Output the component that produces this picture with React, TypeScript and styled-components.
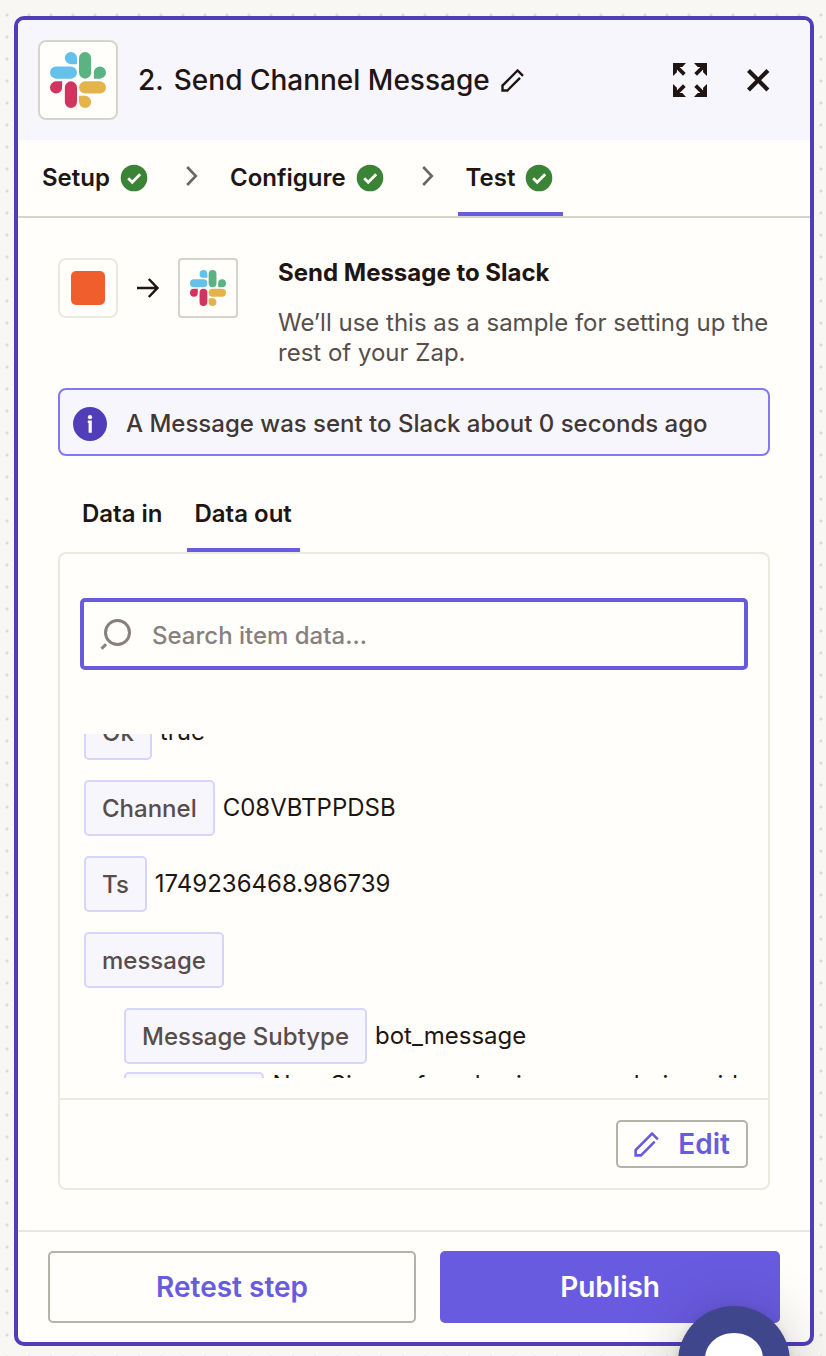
import React from "react";
import styled, { createGlobalStyle } from "styled-components";

const color = {
  ink: "#1f1513",
  soft: "#574e4c",
  accent: "#695be0",
  deep: "#503eb9",
  tint: "#f7f6fd",
  surface: "#fffefa",
  line: "#ebeae1",
  border: "#d7d5cb",
};

const GlobalStyle = createGlobalStyle`
  *, *::before, *::after { box-sizing: border-box; }
  body {
    margin: 0;
    font-family: Inter, "Liberation Sans", sans-serif;
    font-size: 24px;
    line-height: 30px;
    color: ${color.ink};
    background-color: #f8f7f4;
    background-image: radial-gradient(circle, #dddbd6 1px, transparent 2px);
    background-size: 22px 22px;
    background-position: -4px 4px;
  }
  button, input { font: inherit; color: inherit; }
  button { cursor: pointer; }
  h1, h2, p, ul { margin: 0; padding: 0; }
  ul { list-style: none; }
  svg { display: block; flex: none; }
`;

const Page = styled.div`
  padding: 16px 12px 10px 14px;
`;

const Panel = styled.main`
  border: 4px solid ${color.deep};
  border-radius: 10px;
  background: ${color.surface};
  overflow: hidden;
`;

const Header = styled.header`
  display: flex;
  align-items: center;
  padding: 20px 30px 20px 20px;
  background: ${color.tint};
`;

const AppTile = styled.span<{ $size: number; $radius: number; $line?: string }>`
  display: flex;
  flex: none;
  align-items: center;
  justify-content: center;
  width: ${(p) => p.$size}px;
  height: ${(p) => p.$size}px;
  border: 2px solid ${(p) => p.$line ?? color.border};
  border-radius: ${(p) => p.$radius}px;
  background: ${color.surface};
`;

const Title = styled.h1`
  display: flex;
  gap: 10px;
  margin-left: 20px;
  font-size: 28px;
  line-height: 36px;
  font-weight: 500;
`;

const IconButton = styled.button`
  display: flex;
  padding: 0;
  border: 0;
  background: none;
`;

const RenameButton = styled(IconButton)`
  margin-left: 11px;
`;

const HeaderActions = styled.div`
  display: flex;
  align-items: center;
  gap: 40px;
  margin-left: auto;
  padding-right: 10px;
`;

const Steps = styled.nav`
  display: flex;
  align-items: center;
  padding-left: 16px;
  border-bottom: 2px solid ${color.border};
`;

const Tab = styled.button<{ $active?: boolean }>`
  display: flex;
  align-items: center;
  gap: 10px;
  padding: 23px 8px 19px;
  border: 0;
  border-bottom: 4px solid ${(p) => (p.$active ? color.accent : "transparent")};
  background: none;
  font-weight: 600;
`;

const StepTab = styled(Tab)`
  padding-right: 10px;
`;

const StepArrow = styled.span`
  padding: 0 24px 4px 28px;
`;

const Content = styled.div`
  padding: 40px;
`;

const Summary = styled.section`
  display: flex;
  gap: 40px;
  margin-bottom: 20px;
`;

const AppFlow = styled.div`
  display: flex;
  align-items: center;
  gap: 19px;
  height: 60px;
`;

const OrangeApp = styled.span`
  width: 34px;
  height: 34px;
  border-radius: 5px;
  background: #ef5e2c;
`;

const SummaryTitle = styled.h2`
  margin-bottom: 20px;
  font-size: 24px;
  line-height: 30px;
  font-weight: 700;
`;

const SummaryText = styled.p`
  color: ${color.soft};
`;

const Notice = styled.div`
  display: flex;
  align-items: center;
  gap: 19px;
  padding: 17px 13px 13px;
  border: 2px solid #8278f3;
  border-radius: 8px;
  background: ${color.tint};
  color: #413735;
  font-weight: 500;
`;

const DataTabs = styled.div`
  display: flex;
  gap: 16px;
  margin-top: 20px;
  padding-left: 16px;
`;

const Card = styled.section`
  border: 2px solid ${color.line};
  border-radius: 8px;
`;

const SearchBox = styled.label`
  display: flex;
  align-items: center;
  gap: 20px;
  margin: 44px 20px 64px;
  padding: 14px 16px;
  border: 4px solid ${color.accent};
  border-radius: 5px;
`;

const SearchInput = styled.input`
  flex: 1;
  min-width: 0;
  height: 36px;
  padding: 2px 0 0;
  border: 0;
  outline: 0;
  background: none;
  font-weight: 500;

  &::placeholder {
    color: #88807e;
    opacity: 1;
  }
`;

const DataViewport = styled.div`
  height: 344px;
  margin: 0 24px 20px;
  overflow: hidden;
`;

const DataList = styled.ul`
  display: flex;
  flex-direction: column;
  gap: 16px;
  margin-top: -32px;
`;

const NestedList = styled.ul`
  display: flex;
  flex-direction: column;
  gap: 4px;
  padding-left: 40px;
`;

const DataRow = styled.li`
  display: flex;
  align-items: center;
  gap: 8px;
  min-height: 60px;
`;

const Key = styled.span`
  flex: none;
  padding: 12px 16px 10px;
  border: 2px solid #d6d5fa;
  border-radius: 5px;
  background: ${color.tint};
  color: ${color.soft};
  font-weight: 500;
`;

const CardFooter = styled.footer`
  display: flex;
  justify-content: flex-end;
  padding: 20px;
  border-top: 2px solid ${color.line};
`;

const Button = styled.button<{ $primary?: boolean }>`
  display: flex;
  align-items: center;
  justify-content: center;
  padding: 16px;
  border: 2px solid ${(p) => (p.$primary ? color.accent : "#b4b2a9")};
  border-radius: 5px;
  background: ${(p) => (p.$primary ? color.accent : color.surface)};
  color: ${(p) => (p.$primary ? color.surface : color.accent)};
  font-size: 28px;
  line-height: 36px;
  font-weight: 600;
`;

const EditButton = styled(Button)`
  gap: 19px;
  padding: 4px 16px;
`;

const PanelFooter = styled.footer`
  display: grid;
  grid-template-columns: 13fr 12fr;
  gap: 24px;
  padding: 19px 30px;
  border-top: 2px solid #e8e7e4;
`;

const ChatLauncher = styled.button`
  position: fixed;
  right: 36px;
  bottom: -62px;
  display: flex;
  justify-content: center;
  width: 112px;
  height: 112px;
  padding: 27px 0 0;
  border: 0;
  border-radius: 50%;
  background: #40468c;
  box-shadow: 0 2px 12px rgba(0, 0, 0, 0.12), 0 4px 64px rgba(0, 0, 0, 0.2);
`;

function SlackLogo({ size }: { size: number }) {
  return (
    <svg width={size} height={size} viewBox="0 0 166 166" aria-hidden="true">
      <path fill="#63c1ea" d="M62 0a18 18 0 0 1 18 18v18H62a18 18 0 0 1 0-36ZM18 43h44a18 18 0 0 1 0 36H18a18 18 0 0 1 0-36Z" />
      <path fill="#5bb384" d="M104 0a18 18 0 0 1 18 18v43a18 18 0 0 1-36 0V18a18 18 0 0 1 18-18ZM148 43a18 18 0 0 1 0 36h-18V61a18 18 0 0 1 18-18Z" />
      <path fill="#d1345f" d="M18 87h18v18a18 18 0 1 1-18-18ZM62 87a18 18 0 0 1 18 18v43a18 18 0 0 1-36 0v-43a18 18 0 0 1 18-18Z" />
      <path fill="#e4b44c" d="M104 87h44a18 18 0 0 1 0 36h-44a18 18 0 0 1 0-36ZM86 130h18a18 18 0 1 1-18 18Z" />
    </svg>
  );
}

function PencilIcon({ size }: { size: number }) {
  return (
    <svg width={size} height={size} viewBox="0 0 23 23" fill="none" stroke="currentColor" strokeWidth="2.4" aria-hidden="true">
      <path d="M22 6.8 16.6 1.5 1.5 16.6v4.9h4.9L19 8.9" />
    </svg>
  );
}

function CheckBadge() {
  return (
    <svg width="28" height="28" viewBox="-14 -14 28 28" aria-hidden="true">
      <circle r="13.3" fill="#3b8337" />
      <path d="M-5.8.2-1.8 4.2 6.2-3.8" fill="none" stroke="#fffefa" strokeWidth="2.8" />
    </svg>
  );
}

function ChevronIcon() {
  return (
    <svg width="12" height="20" viewBox="0 0 12 20" fill="none" stroke="#6b6665" strokeWidth="2.6" aria-hidden="true">
      <path d="M1.2 1 9.8 10l-8.6 9" />
    </svg>
  );
}

function ArrowIcon() {
  return (
    <svg width="22" height="20" viewBox="0 0 22 20" fill="none" stroke="currentColor" strokeWidth="2.5" aria-hidden="true">
      <path d="M0 10h20M11.8 1l8.6 9-8.6 9" />
    </svg>
  );
}

function ExpandIcon() {
  const corner = "M0 0h13L9.3 3.9H6.6l6.1 6.1-2.7 2.7-6.1-6.1v2.7L0 13Z";
  return (
    <svg width="34" height="34" viewBox="0 0 34 34" fill="currentColor" aria-hidden="true">
      <path d={corner} />
      <path d={corner} transform="matrix(-1 0 0 1 34 0)" />
      <path d={corner} transform="matrix(1 0 0 -1 0 34)" />
      <path d={corner} transform="matrix(-1 0 0 -1 34 34)" />
    </svg>
  );
}

function CloseIcon() {
  return (
    <svg width="23" height="23" viewBox="0 0 23 23" stroke="currentColor" strokeWidth="4.2" aria-hidden="true">
      <path d="M1.5 1.5 20.9 20.9M20.9 1.5 1.5 20.9" />
    </svg>
  );
}

function InfoIcon() {
  return (
    <svg width="34" height="34" viewBox="-17 -17 34 34" aria-hidden="true">
      <circle r="17" fill={color.deep} />
      <circle cy="-6.8" r="2.1" fill="#fffefa" />
      <path d="M-2.2-3.6h4V8.7h-3.2V-1h-.8Z" fill="#fffefa" />
    </svg>
  );
}

function SearchIcon() {
  return (
    <svg width="32" height="34" viewBox="0 0 32 34" fill="none" stroke="#88807e" strokeWidth="3" aria-hidden="true">
      <circle cx="17.5" cy="15.5" r="12" />
      <path d="M1.5 31.7 6 27.2" />
    </svg>
  );
}

const steps = ["Setup", "Configure", "Test"];

const fields = [
  { name: "Ok", value: "true" },
  { name: "Channel", value: "C08VBTPPDSB" },
  { name: "Ts", value: "1749236468.986739" },
  { name: "message" },
];

const messageFields = [
  { name: "Message Subtype", value: "bot_message" },
  { name: "Message", value: "New Signup for a basic course, being aid to your team" },
];

function Field({ name, value }: { name: string; value?: string }) {
  return (
    <DataRow>
      <Key>{name}</Key>
      {value && <span>{value}</span>}
    </DataRow>
  );
}

export default function App() {
  return (
    <Page>
      <GlobalStyle />
      <Panel>
        <Header>
          <AppTile $size={80} $radius={8}>
            <SlackLogo size={56} />
          </AppTile>
          <Title>
            <span>2.</span>
            <span>Send Channel Message</span>
          </Title>
          <RenameButton aria-label="Rename step">
            <PencilIcon size={23} />
          </RenameButton>
          <HeaderActions>
            <IconButton aria-label="Expand">
              <ExpandIcon />
            </IconButton>
            <IconButton aria-label="Close">
              <CloseIcon />
            </IconButton>
          </HeaderActions>
        </Header>

        <Steps aria-label="Steps">
          {steps.map((step, i) => (
            <React.Fragment key={step}>
              {i > 0 && (
                <StepArrow>
                  <ChevronIcon />
                </StepArrow>
              )}
              <StepTab $active={step === "Test"}>
                {step}
                <CheckBadge />
              </StepTab>
            </React.Fragment>
          ))}
        </Steps>

        <Content>
          <Summary>
            <AppFlow>
              <AppTile $size={60} $radius={8} $line={color.line}>
                <OrangeApp />
              </AppTile>
              <ArrowIcon />
              <AppTile $size={60} $radius={4}>
                <SlackLogo size={36} />
              </AppTile>
            </AppFlow>
            <div>
              <SummaryTitle>Send Message to Slack</SummaryTitle>
              <SummaryText>We’ll use this as a sample for setting up the rest of your Zap.</SummaryText>
            </div>
          </Summary>

          <Notice role="status">
            <InfoIcon />
            A Message was sent to Slack about 0 seconds ago
          </Notice>

          <DataTabs role="tablist">
            <Tab role="tab" aria-selected={false}>Data in</Tab>
            <Tab role="tab" aria-selected $active>Data out</Tab>
          </DataTabs>

          <Card>
            <SearchBox>
              <SearchIcon />
              <SearchInput type="text" aria-label="Search item data" placeholder="Search item data..." />
            </SearchBox>
            <DataViewport>
              <DataList>
                {fields.map((field) => (
                  <Field key={field.name} {...field} />
                ))}
                <li>
                  <NestedList>
                    {messageFields.map((field) => (
                      <Field key={field.name} {...field} />
                    ))}
                  </NestedList>
                </li>
              </DataList>
            </DataViewport>
            <CardFooter>
              <EditButton>
                <PencilIcon size={25} />
                Edit
              </EditButton>
            </CardFooter>
          </Card>
        </Content>

        <PanelFooter>
          <Button>Retest step</Button>
          <Button $primary>Publish</Button>
        </PanelFooter>
      </Panel>

      <ChatLauncher aria-label="Open chat">
        <svg width="58" height="58" viewBox="0 0 58 58" aria-hidden="true">
          <path fill="#fff" d="M29 0c16 0 29 11 29 26v32H29C13 58 0 41 0 26S13 0 29 0Z" />
        </svg>
      </ChatLauncher>
    </Page>
  );
}
